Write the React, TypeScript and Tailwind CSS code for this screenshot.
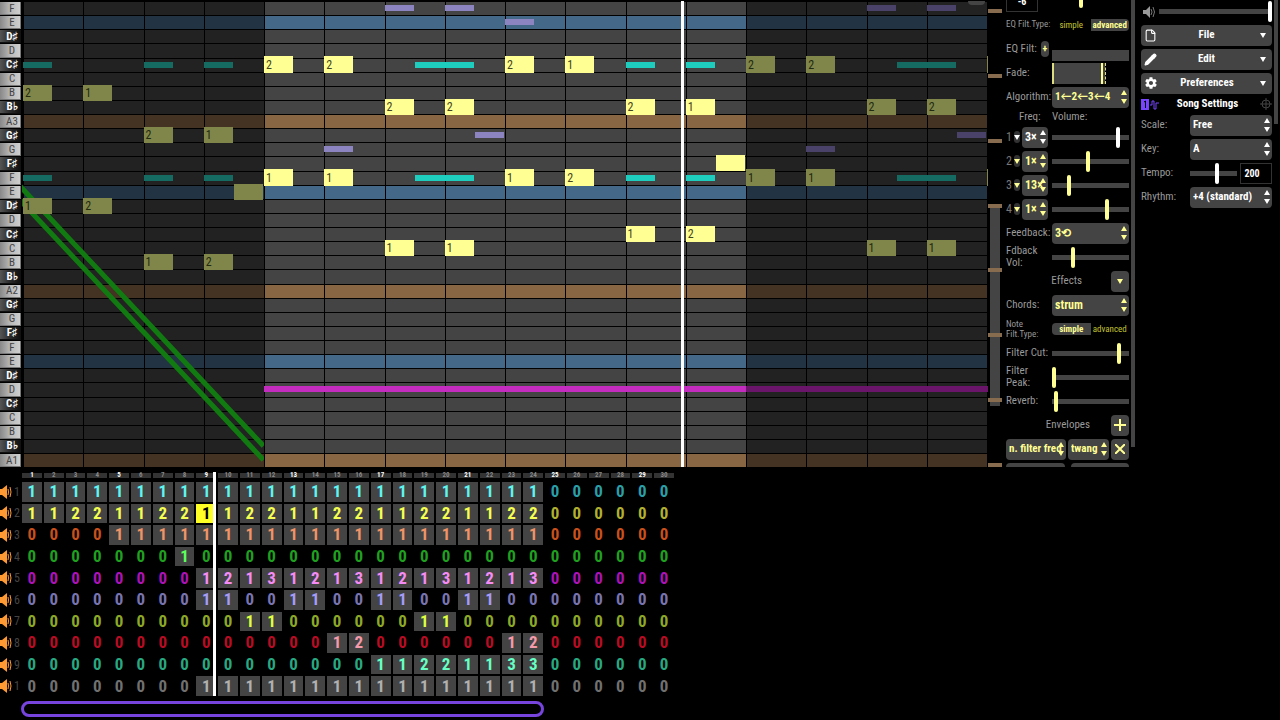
import React from "react";
import { Pencil, File as FileIcon } from "lucide-react";
import { IoMdSettings } from "react-icons/io";
import clsx from "clsx";

const PITCHES = [
  "F", "E", "D♯", "D", "C♯", "C", "B", "B♭", "A3", "G♯", "G",
  "F♯", "F", "E", "D♯", "D", "C♯", "C", "B", "B♭", "A2", "G♯",
  "G", "F♯", "F", "E", "D♯", "D", "C♯", "C", "B", "B♭", "A1",
];

const BEATS = 16;

// [half beat, row, label]
type MainNote = [number, number, string];
// [half beat, row, length in half beats]
type GhostNote = [number, number, number];

const mainNotes: MainNote[] = [
  [0, 6, "2"], [2, 6, "1"], [4, 9, "2"], [6, 9, "1"], [7, 13, ""],
  [0, 14, "1"], [2, 14, "2"], [4, 18, "1"], [6, 18, "2"],
  [8, 4, "2"], [10, 4, "2"], [16, 4, "2"], [18, 4, "1"],
  [12, 7, "2"], [14, 7, "2"], [20, 7, "2"], [22, 7, "1"],
  [23, 11, ""],
  [8, 12, "1"], [10, 12, "1"], [16, 12, "1"], [18, 12, "2"],
  [20, 16, "1"], [22, 16, "2"], [12, 17, "1"], [14, 17, "1"],
  [24, 4, "2"], [26, 4, "2"], [28, 7, "2"], [30, 7, "2"],
  [24, 12, "1"], [26, 12, "1"], [28, 17, "1"], [30, 17, "1"],
];

const tealNotes: GhostNote[] = [
  [0, 4, 1], [4, 4, 1], [6, 4, 1], [0, 12, 1], [4, 12, 1], [6, 12, 1],
  [13, 4, 2], [13, 12, 2], [20, 4, 1], [22, 4, 1], [20, 12, 1], [22, 12, 1],
  [29, 4, 2], [29, 12, 2],
];

const purpleNotes: GhostNote[] = [
  [12, 0, 1], [14, 0, 1], [16, 1, 1], [15, 9, 1], [10, 10, 1],
  [28, 0, 1], [30, 0, 1], [31, 9, 1], [26, 10, 1],
];

const magentaNotes: GhostNote[] = [[8, 27, 16], [24, 27, 9]];

// Rows where the next bar's notes peek in at the right edge
const nextBarRows = [4, 12];

const isLit = (half: number) => half >= 8 && half < 24;

const rowColor = (pitch: string, lit: boolean) => {
  if (pitch.startsWith("A")) return lit ? "bg-[#886644]" : "bg-[#443222]";
  if (pitch === "E") return lit ? "bg-[#446888]" : "bg-[#223444]";
  return lit ? "bg-[#444444]" : "bg-[#222222]";
};

const place = (half: number, row: number, length: number) => ({
  gridColumn: `${half + 1} / span ${length}`,
  gridRow: row + 1,
});

const Ghosts: React.FC<{ notes: GhostNote[]; lit: string; dim: string }> = ({ notes, lit, dim }) => (
  <>
    {notes.map(([half, row, length]) => (
      <div
        key={`${half}-${row}`}
        style={place(half, row, length)}
        className={clsx("h-[6px] self-center", length < 8 && "mr-px", isLit(half) ? lit : dim)}
      />
    ))}
  </>
);

const Piano = () => (
  <div className="flex w-[22px] shrink-0 flex-col">
    {PITCHES.map((pitch, i) => {
      const sharp = pitch.length > 1 && !pitch.startsWith("A");
      return (
        <button
          key={i}
          className={clsx(
            "mt-px mr-px flex min-h-0 flex-1 items-center justify-center border-r border-b pl-1 text-[11px] leading-none",
            sharp
              ? "border-[#111] bg-linear-to-r from-[#555] via-[#2b2b2b] to-[#111] font-bold text-white"
              : "border-[#777] bg-linear-to-r from-[#888] via-[#b8b8b8] to-[#cfcfcf] text-[#444]"
          )}
        >
          {pitch}
        </button>
      );
    })}
  </div>
);

const PatternEditor = () => (
  <div className="relative min-w-0 flex-1 overflow-hidden bg-black">
    {/* Pitch rows */}
    <div className="flex h-full flex-col px-px">
      {PITCHES.map((pitch, i) => (
        <div key={i} className="grid min-h-0 flex-1 grid-cols-16">
          {Array.from({ length: BEATS }, (_, beat) => (
            <div
              key={beat}
              className={clsx("border-t border-l border-black", rowColor(pitch, isLit(beat * 2)))}
            />
          ))}
        </div>
      ))}
    </div>

    {/* Falling slide of the fourth channel */}
    <svg viewBox="0 0 241 466" preserveAspectRatio="none" className="absolute inset-y-0 left-0 h-full w-1/4">
      <path d="M-4 197L241 459M-4 183L241 445" stroke="#117a11" strokeWidth="5" fill="none" />
    </svg>

    {/* Notes */}
    <div className="absolute inset-0 grid grid-cols-[repeat(32,minmax(0,1fr))_1px] grid-rows-[repeat(33,minmax(0,1fr))] pl-px">
      <Ghosts notes={tealNotes} lit="bg-[#1fcdbf]" dim="bg-[#156b62]" />
      <Ghosts notes={purpleNotes} lit="bg-[#8c84c0]" dim="bg-[#4a4268]" />
      <Ghosts notes={magentaNotes} lit="bg-[#c42cc0]" dim="bg-[#6a146a]" />
      {mainNotes.map(([half, row, label]) => (
        <div
          key={`${half}-${row}`}
          style={place(half, row, 1)}
          className={clsx(
            "-my-px mr-px flex items-center pl-[2px] text-[12px] leading-none",
            isLit(half) ? "bg-[#ffff93] text-[#444420]" : "bg-[#80864a] text-[#222a10]"
          )}
        >
          {label}
        </div>
      ))}
      {nextBarRows.map((row) => (
        <div key={row} style={place(32, row, 1)} className="-my-px bg-[#80864a]" />
      ))}
    </div>

    <div className="absolute inset-y-0 left-[68.2%] w-[3px] bg-white" />
    <button aria-label="Zoom in" className="absolute -top-4 right-[3px] h-5 w-[17px] rounded bg-[#444]" />
  </div>
);

const OctaveBar = () => (
  <div className="relative w-[14px] shrink-0">
    <div className="absolute inset-x-[2px] top-[44%] h-[43%] bg-[#444]" />
    <div className="relative flex h-full flex-col justify-between pt-[9px]">
      {Array.from({ length: 8 }, (_, i) => (
        <div key={i} className="h-1 bg-[#886c50]" />
      ))}
    </div>
  </div>
);

const Arrows = () => (
  <svg viewBox="0 0 6 14" className="pointer-events-none absolute right-[2px] top-1/2 h-[14px] w-[6px] -translate-y-1/2 fill-current">
    <path d="M3 0L6 5H0zM3 14L0 9H6z" />
  </svg>
);

const Caret = () => (
  <svg viewBox="0 0 6 5" className="h-[5px] w-[6px] fill-current">
    <path d="M0 0H6L3 5z" />
  </svg>
);

interface SelectProps {
  id?: string;
  label?: string;
  value: string;
  className?: string;
}

const Select: React.FC<SelectProps> = ({ id, label, value, className }) => (
  <div className={clsx("relative h-[21px] min-w-0 rounded bg-[#444]", className)}>
    <select id={id} aria-label={label} className="h-full w-full appearance-none overflow-hidden rounded pl-[3px] font-bold outline-none">
      <option>{value}</option>
    </select>
    <Arrows />
  </div>
);

interface SliderProps {
  id?: string;
  label?: string;
  value: number;
  white?: boolean;
  className?: string;
}

const Slider: React.FC<SliderProps> = ({ id, label, value, white, className }) => (
  <input
    id={id}
    aria-label={label}
    type="range"
    defaultValue={value}
    className={clsx(
      "h-[21px] min-w-0 appearance-none bg-transparent",
      "[&::-webkit-slider-runnable-track]:h-[5px] [&::-webkit-slider-runnable-track]:bg-[#444]",
      "[&::-webkit-slider-thumb]:-mt-2 [&::-webkit-slider-thumb]:h-[21px] [&::-webkit-slider-thumb]:w-1 [&::-webkit-slider-thumb]:appearance-none [&::-webkit-slider-thumb]:rounded-sm",
      white ? "[&::-webkit-slider-thumb]:bg-white" : "[&::-webkit-slider-thumb]:bg-[#ffff93]",
      className
    )}
  />
);

interface RowProps {
  label: string;
  htmlFor?: string;
  wrap?: boolean;
  children: React.ReactNode;
}

const Row: React.FC<RowProps> = ({ label, htmlFor, wrap, children }) => (
  <div className="flex h-6 shrink-0 items-center">
    <label
      htmlFor={htmlFor}
      className={clsx("w-[46px] shrink-0 text-[11px] leading-3 text-[#999]", !wrap && "whitespace-nowrap")}
    >
      {label}
    </label>
    {children}
  </div>
);

const FilterType: React.FC<{ advanced?: boolean }> = ({ advanced }) => (
  <div className="flex h-3 w-[77px] shrink-0 text-[9px] leading-3">
    <button className={clsx("flex-1 rounded-l", advanced ? "text-[#c4c430]" : "bg-[#444] font-bold")}>simple</button>
    <button className={clsx("flex-1 rounded-r", advanced ? "bg-[#444] font-bold" : "text-[#c4c430]")}>advanced</button>
  </div>
);

const operators = [
  { freq: "3×", volume: 87, white: true },
  { freq: "1×", volume: 46 },
  { freq: "13×", volume: 20 },
  { freq: "1×", volume: 73 },
];

const InstrumentPanel = () => (
  <div className="flex w-[133px] shrink-0 overflow-hidden pl-1 text-[12px] text-[#ffff93]">
    <div className="flex w-[123px] flex-col">
      <div className="flex h-[13px] shrink-0 items-end justify-between overflow-hidden">
        <input
          aria-label="Volume amount"
          defaultValue="-6"
          className="mb-px h-[21px] w-8 shrink-0 border border-[#333] pb-px text-center text-[10px] font-bold text-white"
        />
        <Slider label="Volume" value={37} className="mb-[5px] w-[77px]" />
      </div>
      <div className="flex h-6 shrink-0 items-center">
        <span className="w-[46px] shrink-0 text-[9px] whitespace-nowrap text-[#999]">EQ Filt.Type:</span>
        <FilterType advanced />
      </div>
      <div className="flex h-6 shrink-0 items-center">
        <span className="flex-1 text-[11px] whitespace-nowrap text-[#999]">EQ Filt:</span>
        <button aria-label="Zoom filter" className="mr-[3px] h-4 w-2 rounded bg-[#444] text-[10px] leading-4 font-bold">
          +
        </button>
        <div className="h-[11px] w-[77px] self-end bg-[#444]" />
      </div>
      <Row label="Fade:">
        <div className="h-[21px] flex-1">
          <div className="flex h-full w-[54px] justify-end border-l-2 border-[#dddd80] bg-[#444]">
            <div className="mr-[2px] w-[2px] bg-[#ffff93]" />
            <div className="border-l border-dashed border-[#dddd80] bg-black" />
          </div>
        </div>
      </Row>
      <Row label="Algorithm:" htmlFor="algorithm">
        <Select id="algorithm" value="1←2←3←4" className="flex-1 text-[11px]" />
      </Row>
      <div className="flex h-4 shrink-0 items-center text-[11px] text-[#999]">
        <span className="w-[46px] pl-[13px]">Freq:</span>
        <span>Volume:</span>
      </div>
      {operators.map((op, i) => (
        <div key={i} className={clsx("flex h-6 shrink-0 items-center", op.white && "text-white")}>
          <span className="w-2 text-[#777]">{i + 1}</span>
          <button aria-label={`Operator ${i + 1} waveform`} className="mr-[2px] flex h-3 w-[6px] items-center rounded-sm bg-[#333]">
            <Caret />
          </button>
          <Select label={`Operator ${i + 1} frequency`} value={op.freq} className="mr-1 w-[26px]" />
          <Slider label={`Operator ${i + 1} volume`} value={op.volume} white={op.white} className="w-[77px]" />
        </div>
      ))}
      <Row label="Feedback:" htmlFor="feedback">
        <Select id="feedback" value="3⟲" className="flex-1" />
      </Row>
      <Row label="Fdback Vol:" htmlFor="feedback-volume" wrap>
        <Slider id="feedback-volume" value={26} className="flex-1" />
      </Row>
      <div className="flex h-6 shrink-0 items-center justify-end text-[11px] text-[#999]">
        <span className="mr-[29px]">Effects</span>
        <button aria-label="Add effect" className="flex h-[21px] w-[18px] items-center justify-center rounded bg-[#444] text-[#ffff93]">
          <Caret />
        </button>
      </div>
      <Row label="Chords:" htmlFor="chords">
        <Select id="chords" value="strum" className="flex-1" />
      </Row>
      <div className="flex h-6 shrink-0 items-center">
        <span className="w-[46px] shrink-0 text-[9px] leading-[10px] text-[#999]">Note Filt.Type:</span>
        <FilterType />
      </div>
      <Row label="Filter Cut:" htmlFor="cut">
        <Slider id="cut" value={89} className="flex-1" />
      </Row>
      <Row label="Filter Peak:" htmlFor="peak" wrap>
        <Slider id="peak" value={0} className="flex-1" />
      </Row>
      <Row label="Reverb:" htmlFor="reverb">
        <Slider id="reverb" value={3} className="flex-1" />
      </Row>
      <div className="flex h-6 shrink-0 items-center justify-end text-[11px] text-[#999]">
        <span className="mr-[21px]">Envelopes</span>
        <button aria-label="Add envelope" className="flex h-[21px] w-[18px] items-center justify-center rounded bg-[#444]">
          <svg viewBox="0 0 12 12" className="size-3 stroke-[#ffff93] stroke-2">
            <path d="M6 0V12M0 6H12" />
          </svg>
        </button>
      </div>
      <div className="flex h-6 shrink-0 items-center gap-[2px]">
        <Select label="Envelope target" value="n. filter freq" className="flex-1 text-[11px]" />
        <Select label="Envelope shape" value="twang" className="w-[41px] text-[11px]" />
        <button aria-label="Remove envelope" className="flex h-[21px] w-[18px] items-center justify-center rounded bg-[#444]">
          <svg viewBox="0 0 10 10" className="size-[10px] stroke-[#ffff93] stroke-2">
            <path d="M0 0L10 10M10 0L0 10" />
          </svg>
        </button>
      </div>
      <div className="flex shrink-0 gap-[6px] pt-[2px]">
        <div className="h-[21px] flex-1 rounded bg-[#444]" />
        <div className="h-[21px] flex-1 rounded bg-[#444]" />
      </div>
    </div>
    <div className="ml-[2px] h-[447px] w-1 bg-[#444]" />
  </div>
);

const menus = [
  { name: "File", icon: <FileIcon className="size-[13px]" /> },
  { name: "Edit", icon: <Pencil className="size-[13px] fill-white" /> },
  { name: "Preferences", icon: <IoMdSettings className="size-[14px]" /> },
];

const SongPanel = () => (
  <div className="flex w-[145px] shrink-0 text-[11px] text-white">
    <div className="ml-[6px] flex w-[131px] flex-col">
      <div className="flex h-[23px] items-center">
        <svg viewBox="0 0 12 12" className="mx-[2px] size-3 shrink-0 fill-[#999]">
          <path d="M0 4H3L7 0V12L3 8H0z" />
          <path d="M8 3Q10 6 8 9M10 1Q13 6 10 11" fill="none" stroke="#777" />
        </svg>
        <Slider label="Song volume" value={100} white className="ml-[2px] flex-1" />
      </div>
      {menus.map(({ name, icon }) => (
        <div key={name} className="flex h-6 items-center">
          <button className="flex h-[21px] flex-1 items-center justify-between rounded bg-[#444] px-[3px] font-bold">
            {icon}
            {name}
            <span className="flex w-[13px] pl-1">
              <Caret />
            </span>
          </button>
        </div>
      ))}
      <div className="flex h-[18px] items-center justify-between">
        <svg viewBox="0 0 18 11" className="h-[11px] w-[18px]">
          <rect width="8" height="11" fill="#7744ff" />
          <path d="M3 3L4.500 2V9" stroke="#000" fill="none" />
          <path d="M9 6H11V2H13V10H15V4H18" stroke="#7744ff" fill="none" />
        </svg>
        <h2 className="pr-1 font-bold">Song Settings</h2>
        <svg viewBox="0 0 12 12" className="size-3 fill-none stroke-[#444]">
          <circle cx="6" cy="6" r="4" />
          <path d="M6 0V12M0 6H12" />
        </svg>
      </div>
      {[
        ["Scale:", "Free"],
        ["Key:", "A"],
      ].map(([label, value]) => (
        <Row key={label} label={label} htmlFor={label}>
          <div className="flex flex-1 pl-[3px]">
            <Select id={label} value={value} className="flex-1" />
          </div>
        </Row>
      ))}
      <Row label="Tempo:" htmlFor="tempo">
        <Slider id="tempo" value={57} white className="mr-[3px] ml-[3px] flex-1" />
        <input
          aria-label="Tempo value"
          defaultValue="200"
          className="h-[21px] w-8 shrink-0 border border-[#333] pr-2 text-center text-[10px] font-bold"
        />
      </Row>
      <Row label="Rhythm:" htmlFor="rhythm">
        <div className="flex flex-1 pl-[3px]">
          <Select id="rhythm" value="+4 (standard)" className="flex-1" />
        </div>
      </Row>
    </div>
    <div className="ml-[2px] h-[124px] w-1 bg-[#444]" />
  </div>
);

// One digit per bar, 30 bars
const channels = [
  { bars: "111111111111111111111111000000", on: "text-[#5ff5f0]", off: "text-[#2a9fa8]" },
  { bars: "112211221122112211221122000000", on: "text-[#f4ff50]", off: "text-[#b0b030]" },
  { bars: "000011111111111111111111000000", on: "text-[#f09468]", off: "text-[#c8501c]" },
  { bars: "000000010000000000000000000000", on: "text-[#5cff5c]", off: "text-[#20a020]" },
  { bars: "000000001213121312131213000000", on: "text-[#f58cf5]", off: "text-[#ac12b8]" },
  { bars: "000000001100110011001100000000", on: "text-[#a49cf8]", off: "text-[#7874b0]" },
  { bars: "000000000011000000110000000000", on: "text-[#dcff40]", off: "text-[#8ca828]" },
  { bars: "000000000000001200000012000000", on: "text-[#f49aaa]", off: "text-[#b80c24]" },
  { bars: "000000000000000011221133000000", on: "text-[#66ffc4]", off: "text-[#28a880]" },
  { bars: "000000001111111111111111000000", on: "text-[#b0b0b0]", off: "text-[#707070]" },
];

const TrackEditor = () => (
  <div className="flex h-[253px] shrink-0 pt-[5px]">
    <div className="flex h-[225px] w-[21px] shrink-0 flex-col pt-[9px]">
      {channels.map((_, i) => (
        <button key={i} aria-label={`Mute channel ${i + 1}`} className="flex min-h-0 flex-1 items-center text-[12px] text-[#444]">
          <svg viewBox="0 0 12 14" className="mr-[2px] h-[14px] w-3 fill-[#ff9933]">
            <path d="M0 4H2L7 0V14L2 10H0z" />
            <path d="M8 4Q9 7 8 10M10 2Q12 7 10 12" fill="none" stroke="#ff9933" />
          </svg>
          {i === 9 ? 1 : i + 1}
        </button>
      ))}
    </div>
    <div className="relative w-[654px]">
      <div className="flex h-[9px] pt-px">
        {Array.from({ length: 30 }, (_, i) => (
          <div
            key={i}
            className={clsx(
              "mx-px h-[5px] flex-1 bg-[#333] text-center text-[7px] leading-[5px] font-bold",
              i % 4 === 0 ? "text-white" : "text-[#888]"
            )}
          >
            {i + 1}
          </div>
        ))}
      </div>
      <div className="flex h-[216px] flex-col">
        {channels.map(({ bars, on, off }, channel) => (
          <div key={channel} className="flex min-h-0 flex-1">
            {bars.split("").map((digit, bar) => {
              const selected = channel === 1 && bar === 8;
              return (
                <button
                  key={bar}
                  className={clsx(
                    "m-px flex flex-1 items-center justify-center text-[17px] leading-none",
                    selected
                      ? "bg-[#ffff25] font-bold text-black"
                      : digit !== "0"
                        ? ["bg-[#444] font-bold", on]
                        : ["font-bold", off]
                  )}
                >
                  {digit}
                </button>
              );
            })}
          </div>
        ))}
      </div>
      <div className="absolute top-0 left-[29.4%] h-[224px] w-[3px] bg-white" />
      <div className="mt-1 h-4 w-4/5 rounded-lg border-[3px] border-[#7744dd]" />
    </div>
  </div>
);

const App = () => (
  <div className="flex h-screen min-h-[600px] flex-col overflow-hidden bg-black font-['Roboto_Condensed','Lato',sans-serif]">
    <div className="flex min-h-0 flex-1">
      <div className="flex min-w-0 flex-1 pt-px">
        <Piano />
        <PatternEditor />
      </div>
      <OctaveBar />
      <InstrumentPanel />
      <SongPanel />
    </div>
    <TrackEditor />
  </div>
);

export default App;
